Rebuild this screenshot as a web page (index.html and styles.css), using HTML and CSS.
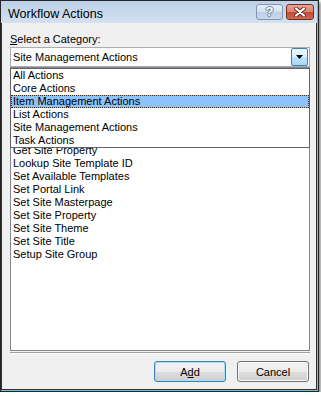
FILE: index.html
```html
<!DOCTYPE html>
<html lang="en">
<head>
    <meta charset="UTF-8">
    <title>Workflow Actions</title>
    <link rel="stylesheet" href="styles.css">
</head>
<body>
    <div class="window">
        <div class="titlebar">
            <span class="title">Workflow Actions</span>
            <div class="caption-buttons">
                <span class="cap-btn help">?</span>
                <span class="cap-btn close">
                    <svg width="14" height="10" viewBox="0 0 14 10">
                        <path d="M3 1.5 L11 8.5 M11 1.5 L3 8.5" stroke="#6b2a1e" stroke-width="4" stroke-linecap="round"/>
                        <path d="M3 1.5 L11 8.5 M11 1.5 L3 8.5" stroke="#ffffff" stroke-width="2.2" stroke-linecap="round"/>
                    </svg>
                </span>
            </div>
        </div>

        <div class="client">
            <div class="field-label"><u>S</u>elect a Category:</div>
            <div class="combo-wrap">
                <div class="combo">
                    <span class="combo-text">Site Management Actions</span>
                    <span class="combo-arrow">
                        <svg width="7" height="4" viewBox="0 0 7 4"><path d="M0 0 H7 L3.5 4 Z" fill="#000"/></svg>
                    </span>
                </div>
                <ul class="dropdown">
                    <li>All Actions</li>
                    <li>Core Actions</li>
                    <li class="selected">Item Management Actions</li>
                    <li>List Actions</li>
                    <li>Site Management Actions</li>
                    <li>Task Actions</li>
                </ul>
            </div>

            <!-- the first rows of the list sit under the open dropdown -->
            <ul class="listbox">
                <li>Get Site Property</li>
                <li>Lookup Site Template ID</li>
                <li>Set Available Templates</li>
                <li>Set Portal Link</li>
                <li>Set Site Masterpage</li>
                <li>Set Site Property</li>
                <li>Set Site Theme</li>
                <li>Set Site Title</li>
                <li>Setup Site Group</li>
            </ul>

            <div class="separator"></div>

            <div class="actions">
                <button class="btn btn-default">A<u>d</u>d</button>
                <button class="btn">Cancel</button>
            </div>
        </div>
    </div>
</body>
</html>
```

FILE: styles.css
```css
body {
    margin: 0;
    background: #ffffff;
    font-family: 'Liberation Sans', Arial, sans-serif;
    font-size: 11px;
    color: #000000;
}

.window {
    width: 319px;
    height: 392px;
    box-sizing: border-box;
    border: 1px solid #262626;
    padding: 0 1px 1px 0;
    background: #6fbfe3;
    box-shadow: 2px 2px 3px rgba(0, 0, 0, 0.45);
    display: flex;
    flex-direction: column;
}

.titlebar {
    height: 22px;
    flex-shrink: 0;
    display: flex;
    align-items: flex-start;
    justify-content: space-between;
    padding: 0 3px 0 7px;
    background: linear-gradient(#bcd0e8, #d3e1f1);
}

.title {
    font-size: 12.5px;
    line-height: 22px;
    padding-top: 2px;
    color: #000000;
}

.caption-buttons {
    display: flex;
    gap: 3px;
    margin-top: 3px;
}

.cap-btn {
    height: 16px;
    box-sizing: border-box;
    border-radius: 3px;
    display: flex;
    align-items: center;
    justify-content: center;
}

.help {
    width: 27px;
    border: 1px solid #8195ad;
    background: linear-gradient(#e6eef8 0%, #d3dff0 50%, #bccde4 51%, #c9d7ea 100%);
    color: #ffffff;
    font-size: 13px;
    font-weight: bold;
    line-height: 14px;
    text-shadow: -1px 0 #6f7f93, 1px 0 #6f7f93, 0 -1px #6f7f93, 0 1px #6f7f93;
}

.close {
    width: 28px;
    border: 1px solid #7a2c21;
    background: linear-gradient(#e6a594 0%, #d9826c 50%, #c64a34 51%, #cf6a50 100%);
}

.client {
    flex: 1;
    display: flex;
    flex-direction: column;
    background: #f0f0f0;
    border-left: 1px solid #333333;
    border-right: 1px solid #333333;
    border-bottom: 1px solid #333333;
    padding: 10px 6px 7px 8px;
}

.field-label {
    line-height: 13px;
    margin-bottom: 1px;
}

.combo-wrap {
    position: relative;
}

.combo {
    height: 20px;
    box-sizing: border-box;
    border: 1px solid #abadb3;
    background: #ffffff;
    display: flex;
    align-items: center;
    justify-content: space-between;
    padding-left: 2px;
}

.combo-arrow {
    width: 17px;
    height: 18px;
    box-sizing: border-box;
    margin-right: 1px;
    border: 1px solid #3c7fb1;
    border-radius: 2px;
    background: linear-gradient(#eaf6fd 0%, #d9f0fc 50%, #bee6fd 51%, #a7d9f5 100%);
    display: flex;
    align-items: center;
    justify-content: center;
}

.dropdown {
    position: absolute;
    top: calc(100% + 1px);
    left: 0;
    right: 0;
    margin: 0;
    padding: 0;
    list-style: none;
    background: #ffffff;
    border: 1px solid #646464;
    z-index: 10;
}

.dropdown li {
    height: 13px;
    line-height: 13px;
    padding-left: 2px;
    white-space: nowrap;
}

.dropdown li.selected {
    background: #8ec2fa;
    outline: 1px dotted #3b2a1a;
    outline-offset: -1px;
}

.listbox {
    flex: 1;
    margin: 0;
    padding: 76px 0 0 0;
    list-style: none;
    background: #ffffff;
    border: 1px solid #828790;
    overflow: hidden;
}

.listbox li {
    height: 13px;
    line-height: 13px;
    padding-left: 2px;
    white-space: nowrap;
}

.separator {
    margin-top: 1px;
    height: 1px;
    background: #a0a0a0;
    border-bottom: 1px solid #ffffff;
}

.actions {
    margin-top: 7px;
    display: flex;
    justify-content: flex-end;
    gap: 11px;
    padding-right: 1px;
}

.btn {
    width: 72px;
    height: 21px;
    box-sizing: border-box;
    font-family: 'Liberation Sans', Arial, sans-serif;
    font-size: 11px;
    color: #000000;
    border: 1px solid #707070;
    border-radius: 3px;
    background: linear-gradient(#f2f2f2 0%, #ebebeb 50%, #dddddd 51%, #cfcfcf 100%);
    box-shadow: inset 0 0 0 1px #fcfcfc;
    padding: 0;
}

.btn-default {
    border-color: #3c7fb1;
    box-shadow: inset 0 0 0 1px #9fe3f8;
}
```
